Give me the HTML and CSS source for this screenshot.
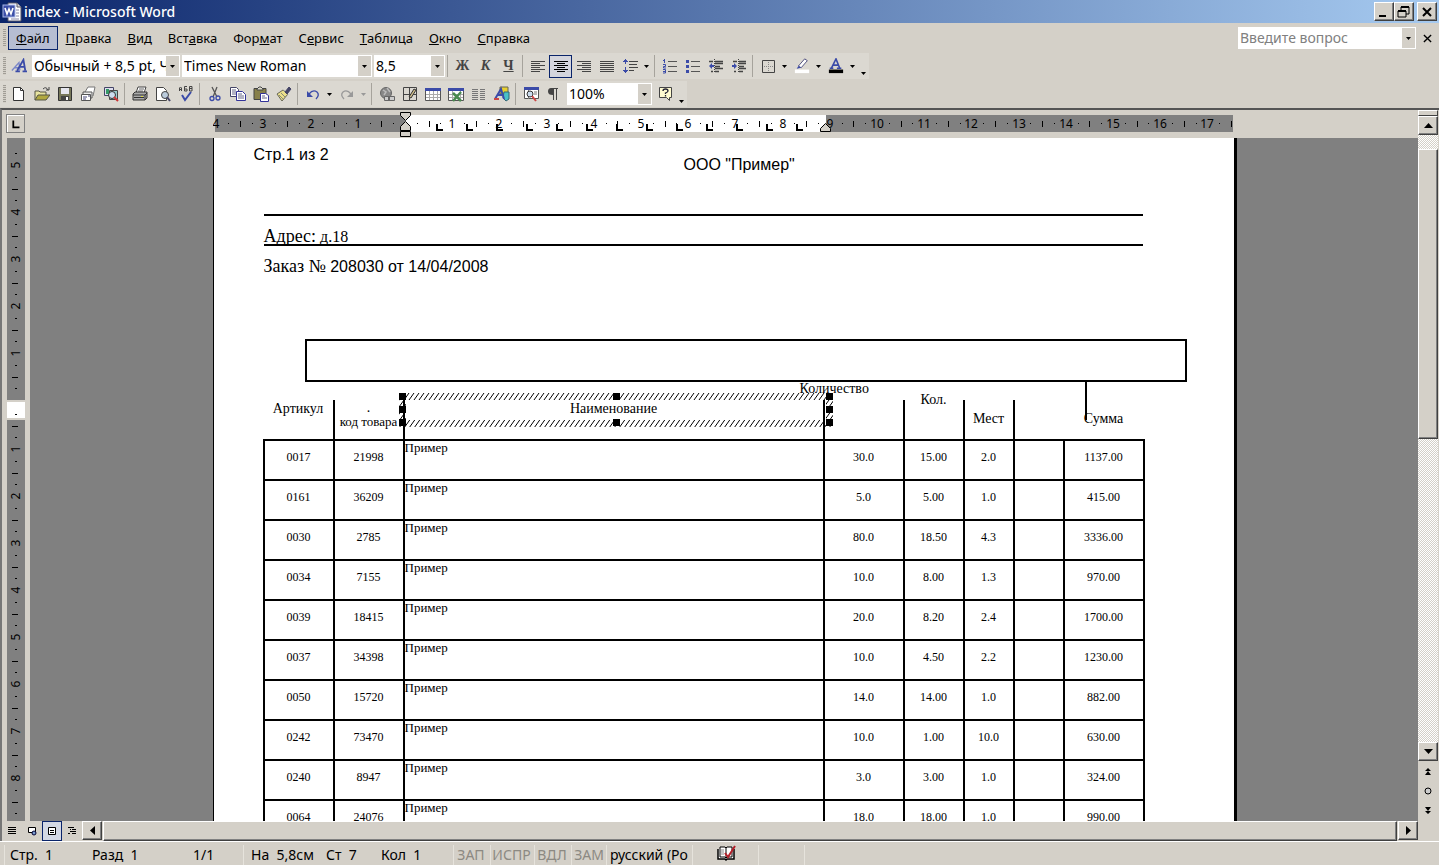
FILE: index.html
```html
<!DOCTYPE html>
<html lang="ru">
<head>
<meta charset="utf-8">
<title>index - Microsoft Word</title>
<link rel="stylesheet" href="styles.css">
</head>
<body>
<div class="window">
  <header class="titlebar">
    <svg class="app-icon" viewBox="0 0 20 20"><path d="M6 1h9l4 4v14H6z" fill="#fff" stroke="#556" /><path d="M15 1v4h4" fill="#ddd" stroke="#556"/><path d="M14 8h3M14 11h3M14 14h3M9 17h8" stroke="#88a"/><rect x="1" y="3" width="12" height="12" fill="#3c4fa8" stroke="#a9b8e8"/><path d="M3 6l2 6 2-5 2 5 2-6" fill="none" stroke="#fff" stroke-width="1.6"/></svg>
    <h1 class="title">index - Microsoft Word</h1>
    <div class="win-buttons">
      <button class="win-btn" aria-label="Свернуть"><svg viewBox="0 0 16 14"><path d="M3 11h7" stroke="#000" stroke-width="2"/></svg></button>
      <button class="win-btn" aria-label="Восстановить"><svg viewBox="0 0 16 14"><path d="M5 5V2h8v7h-3" fill="none" stroke="#000"/><path d="M5 2h8M2 6h8" stroke="#000" stroke-width="2"/><path d="M2 6h8v6H2z" fill="none" stroke="#000"/></svg></button>
      <button class="win-btn win-close" aria-label="Закрыть"><svg viewBox="0 0 16 14"><path d="M4 3l8 8M12 3l-8 8" stroke="#000" stroke-width="2"/></svg></button>
    </div>
  </header>

  <nav class="menubar">
    <span class="grip"></span>
    <button class="menu open"><u>Ф</u>айл</button>
    <button class="menu"><u>П</u>равка</button>
    <button class="menu"><u>В</u>ид</button>
    <button class="menu">Вст<u>а</u>вка</button>
    <button class="menu">Фор<u>м</u>ат</button>
    <button class="menu">С<u>е</u>рвис</button>
    <button class="menu"><u>Т</u>аблица</button>
    <button class="menu"><u>О</u>кно</button>
    <button class="menu"><u>С</u>правка</button>
    <div class="ask">
      <input class="ask-input" type="text" placeholder="Введите вопрос" aria-label="Введите вопрос">
      <button class="ask-drop" aria-label="Список вопросов"><svg class="tri" viewBox="0 0 7 4"><path d="M0 0h7L3.500 4z"/></svg></button>
    </div>
    <button class="doc-close" aria-label="Закрыть документ"><svg viewBox="0 0 10 10"><path d="M1 1l8 8M9 1l-8 8" stroke="#000" stroke-width="1.500"/></svg></button>
  </nav>

  <div class="toolbar">
    <span class="grip"></span>
    <button class="tool" aria-label="Стили"><svg viewBox="0 0 18 18"><path d="M1 14L9 5l1 9M4 11h6" fill="none" stroke="#7a86c8" stroke-width="1.500"/><path d="M7 14L14 2l2 12M9 10h7M5 15h5M13 15h5" fill="none" stroke="#3b4ba8" stroke-width="2"/></svg></button>
    <div class="combo style-combo"><select aria-label="Стиль"><option>Обычный + 8,5 pt, Черный</option></select><span class="drop"><svg class="tri" viewBox="0 0 7 4"><path d="M0 0h7L3.500 4z"/></svg></span></div>
    <div class="combo font-combo"><select aria-label="Шрифт"><option>Times New Roman</option></select><span class="drop"><svg class="tri" viewBox="0 0 7 4"><path d="M0 0h7L3.500 4z"/></svg></span></div>
    <div class="combo size-combo"><select aria-label="Размер"><option>8,5</option></select><span class="drop"><svg class="tri" viewBox="0 0 7 4"><path d="M0 0h7L3.500 4z"/></svg></span></div>
    <span class="sep"></span>
    <button class="tool letter">Ж</button>
    <button class="tool letter italic">К</button>
    <button class="tool letter under">Ч</button>
    <span class="sep"></span>
    <button class="tool" aria-label="По левому краю"><svg viewBox="0 0 16 16"><path d="M1 3.500h14M1 5.500h9M1 7.500h14M1 9.500h9M1 11.500h14M1 13.500h9" stroke="#444"/></svg></button>
    <button class="tool on" aria-label="По центру"><svg viewBox="0 0 16 16"><path d="M1 3.500h14M4 5.500h8M1 7.500h14M4 9.500h8M1 11.500h14M4 13.500h8" stroke="#000"/></svg></button>
    <button class="tool" aria-label="По правому краю"><svg viewBox="0 0 16 16"><path d="M1 3.500h14M6 5.500h9M1 7.500h14M6 9.500h9M1 11.500h14M6 13.500h9" stroke="#444"/></svg></button>
    <button class="tool" aria-label="По ширине"><svg viewBox="0 0 16 16"><path d="M1 3.500h14M1 5.500h14M1 7.500h14M1 9.500h14M1 11.500h14M1 13.500h14" stroke="#444"/></svg></button>
    <button class="tool" aria-label="Интервал"><svg viewBox="0 0 16 16"><path d="M3.500 1v5M3.500 9v6M1 3.500h5M2 2.500h3M1 12.500h5M2 13.500h3" stroke="#3b4ba8"/><path d="M7 3.500h9M7 6.500h8M7 9.500h9M7 12.500h5" stroke="#444"/></svg></button>
    <button class="arrow" aria-label="Варианты интервала"><svg class="tri" viewBox="0 0 7 4"><path d="M0 0h7L3.500 4z"/></svg></button>
    <span class="sep"></span>
    <button class="tool" aria-label="Нумерация"><svg viewBox="0 0 16 16"><path d="M6 3.500h9M6 8.500h9M6 13.500h9" stroke="#555"/><path d="M2.500 1v4M1 2.500h2M1 6.500h2.500v2H1.500v1.500H4M1 11.500h2.500v3.500H1M1 13.500h2" fill="none" stroke="#3b4ba8"/></svg></button>
    <button class="tool" aria-label="Маркеры"><svg viewBox="0 0 16 16"><path d="M6 3.500h9M6 8.500h9M6 13.500h9" stroke="#555"/><path d="M1 2h3v3H1zM1 7h3v3H1zM1 12h3v3H1z" fill="#3b4ba8"/></svg></button>
    <button class="tool" aria-label="Уменьшить отступ"><svg viewBox="0 0 16 16"><path d="M1 3.500h4M7 3.500h8M7 5.500h8M7 8.500h5M7 10.500h8M3 13.500h2M7 13.500h4" stroke="#444" stroke-width="1.500"/><path d="M6.500 1v14" stroke="#444" stroke-dasharray="1 1"/><path d="M1 8l3-3v2h2v2H4v2z" fill="#3b4ba8"/></svg></button>
    <button class="tool" aria-label="Увеличить отступ"><svg viewBox="0 0 16 16"><path d="M2 3.500h4M8 3.500h7M8 5.500h7M8 8.500h5M8 10.500h7M3 13.500h2M8 13.500h4" stroke="#444" stroke-width="1.500"/><path d="M7.500 1v14" stroke="#444" stroke-dasharray="1 1"/><path d="M6 8L3 5v2H1v2h2v2z" fill="#3b4ba8"/></svg></button>
    <span class="sep"></span>
    <button class="tool" aria-label="Границы"><svg viewBox="0 0 16 16"><path d="M2.500 2.500h12v12h-12z" fill="none" stroke="#444"/><path d="M8.500 4v10M4 8.500h10" stroke="#888" stroke-dasharray="1 1"/></svg></button>
    <button class="arrow" aria-label="Виды границ"><svg class="tri" viewBox="0 0 7 4"><path d="M0 0h7L3.500 4z"/></svg></button>
    <button class="tool" aria-label="Выделение цветом"><svg viewBox="0 0 16 18"><path d="M4 9l7-8 3 2-7 8z" fill="#fff" stroke="#447"/><path d="M4 9l3 2-5 1z" fill="#3b4ba8"/><path d="M0 13h16v4H0z" fill="#fff"/></svg></button>
    <button class="arrow" aria-label="Цвета выделения"><svg class="tri" viewBox="0 0 7 4"><path d="M0 0h7L3.500 4z"/></svg></button>
    <button class="tool" aria-label="Цвет шрифта"><svg viewBox="0 0 16 18"><path d="M3 11L8 1l4 10M5 8h6M1 11.500h4M9 11.500h5" fill="none" stroke="#3b4ba8" stroke-width="1.800"/><path d="M0 13h16v4H0z"/></svg></button>
    <button class="arrow" aria-label="Цвета шрифта"><svg class="tri" viewBox="0 0 7 4"><path d="M0 0h7L3.500 4z"/></svg></button>
    <button class="arrow more" aria-label="Параметры панели"><svg class="tri" viewBox="0 0 7 4"><path d="M0 0h7L3.500 4z"/></svg></button>
  </div>

  <div class="toolbar standard">
    <span class="grip"></span>
    <button class="tool" aria-label="Создать"><svg viewBox="0 0 16 16"><path d="M2.500 1.500h7l3 3v10h-10z" fill="#fff" stroke="#333"/><path d="M9.500 1.500v3h3" fill="none" stroke="#333"/></svg></button>
    <button class="tool" aria-label="Открыть"><svg viewBox="0 0 16 16"><path d="M1 14V5h4l1 1h6v3" fill="#e8e4a0" stroke="#554"/><path d="M1 14l3-5h12l-4 5z" fill="#b0a840" stroke="#554"/><path d="M9 3q3-3 5 1M12 4h3V1" fill="none" stroke="#444"/></svg></button>
    <button class="tool" aria-label="Сохранить"><svg viewBox="0 0 16 16"><path d="M1.500 1.500h13v13h-13z" fill="#77775a" stroke="#333"/><path d="M4 2h8v6H4z" fill="#e6e6ee"/><path d="M4 10h8v5H4z" fill="#444"/><path d="M9 11h2v3H9z" fill="#fff"/></svg></button>
    <button class="tool" aria-label="Сообщение"><svg viewBox="0 0 16 16"><path d="M5 6l3-5h7l-2 9" fill="#fff" stroke="#777"/><path d="M3 6h9v6H3z" fill="#eee" stroke="#555"/><path d="M1.500 8.500h9v6h-9z" fill="#fff" stroke="#555"/><path d="M3 11h4M3 13h3M8 10h2" stroke="#447"/></svg></button>
    <button class="tool" aria-label="Поиск"><svg viewBox="0 0 16 16"><path d="M1.500 1.500h9v8h-9z" fill="#dde" stroke="#446"/><path d="M3 3h3v5H3z" fill="#396"/><path d="M6.500 4.500h8v9h-8z" fill="#9cc" stroke="#444"/><circle cx="9" cy="9" r="3.500" fill="#cde" stroke="#333"/><path d="M11 11l4 4" stroke="#c33" stroke-width="2"/></svg></button>
    <span class="sep"></span>
    <button class="tool" aria-label="Печать"><svg viewBox="0 0 16 16"><path d="M4 7l2-6h8l-2 6" fill="#fff" stroke="#444"/><path d="M7 3h5M6 5h5" stroke="#666"/><path d="M1 8l2-2h12v6l-2 2H1z" fill="#aaa" stroke="#333"/><path d="M1 9h12v5M13 9l2-2M2 11.500h10" fill="none" stroke="#333"/><path d="M9 10.500h2" stroke="#dd4"/></svg></button>
    <button class="tool" aria-label="Просмотр"><svg viewBox="0 0 16 16"><path d="M1.500 1.500h7l3 3v10h-10z" fill="#fff" stroke="#444"/><circle cx="10" cy="9" r="3.500" fill="#bcd" stroke="#444"/><path d="M12 11l3 4" stroke="#446" stroke-width="2"/></svg></button>
    <button class="tool" aria-label="Правописание"><svg viewBox="0 0 16 16"><path d="M1.500 5V2q1-2 2 0v3M2 3.500h2M9 .5H6.500V5H9V3H7M11.500 5V.5H14V5h-2.500M12 2.500h2" fill="none" stroke="#444"/><path d="M4 9l3 5 6-8" fill="none" stroke="#3b4ba8" stroke-width="2"/></svg></button>
    <span class="sep"></span>
    <button class="tool" aria-label="Вырезать"><svg viewBox="0 0 16 16"><path d="M5 1l5 10M10 1L6 11" stroke="#555" stroke-width="1.300"/><circle cx="5" cy="12.500" r="2" fill="none" stroke="#3b4ba8" stroke-width="1.300"/><circle cx="11" cy="12" r="2" fill="none" stroke="#3b4ba8" stroke-width="1.300"/></svg></button>
    <button class="tool" aria-label="Копировать"><svg viewBox="0 0 16 16"><path d="M.5 1.500h6l2 2v7h-8z" fill="#fff" stroke="#446"/><path d="M2 4h4M2 6h4M2 8h4" stroke="#668"/><path d="M6.500 5.500h6l3 3v6h-9z" fill="#fff" stroke="#339"/><path d="M8 8h4M8 10h6M8 12h6" stroke="#668"/></svg></button>
    <button class="tool" aria-label="Вставить"><svg viewBox="0 0 16 16"><path d="M1 2.500h12v11H1z" fill="#88804a" stroke="#444"/><path d="M4 3l2-2h2l2 2v1H4z" fill="#ddc" stroke="#444"/><path d="M7.500 7.500h5l3 2v6h-8z" fill="#fff" stroke="#339"/><path d="M9 10h3M9 12h5" stroke="#668"/></svg></button>
    <button class="tool" aria-label="Формат по образцу"><svg viewBox="0 0 16 16"><path d="M1 8l6-4 5 4-6 7z" fill="#eadf8a" stroke="#665"/><path d="M7 4l5 5M3 9l4 4M5 7l4 4" stroke="#887"/><path d="M9 6l4-5 2 2-4 5z" fill="#446" stroke="#446"/></svg></button>
    <span class="sep"></span>
    <button class="tool" aria-label="Отменить"><svg viewBox="0 0 16 16"><path d="M4 8q4-5 8-2 3 3-1 7" fill="none" stroke="#3b4ba8" stroke-width="1.300"/><path d="M2 5v6h6z" fill="#3b4ba8"/></svg></button>
    <button class="arrow" aria-label="Список отмены"><svg class="tri" viewBox="0 0 7 4"><path d="M0 0h7L3.500 4z"/></svg></button>
    <button class="tool" aria-label="Вернуть" disabled><svg viewBox="0 0 16 16"><path d="M12 8Q8 3 4 6q-3 3 1 7" fill="none" stroke="#999" stroke-width="1.300"/><path d="M14 5v6H8z" fill="#999"/></svg></button>
    <button class="arrow pale" aria-label="Список возврата" disabled><svg class="tri" viewBox="0 0 7 4"><path d="M0 0h7L3.500 4z"/></svg></button>
    <span class="sep"></span>
    <button class="tool" aria-label="Гиперссылка"><svg viewBox="0 0 16 16"><circle cx="7" cy="7" r="5.500" fill="#888" stroke="#666"/><path d="M4 4l3 2-2 3M8 2l3 4" fill="none" stroke="#bbb" stroke-width="1.500"/><path d="M5.500 10.500h5v4h-5zM9.500 10.500h6v4h-6z" fill="#ccc" stroke="#666"/></svg></button>
    <button class="tool" aria-label="Таблицы и границы"><svg viewBox="0 0 16 16"><path d="M1.500 1.500h13v13h-13zM1.500 8.500h13M7.500 1.500v13" fill="none" stroke="#444"/><path d="M7 11l5-8 2 1-5 8z" fill="#cb8" stroke="#333"/></svg></button>
    <button class="tool" aria-label="Добавить таблицу"><svg viewBox="0 0 16 16"><path d="M.5 2.500h15v12H.5z" fill="#fff" stroke="#555"/><path d="M0 2h16v3H0z" fill="#3b4ba8"/><path d="M1 8.500h14M1 11.500h14M4.500 5v9M8.500 5v9M12.500 5v9" stroke="#aaa"/></svg></button>
    <button class="tool" aria-label="Таблица Excel"><svg viewBox="0 0 16 16"><path d="M.5 2.500h15v12H.5z" fill="#fff" stroke="#555"/><path d="M0 2h16v3H0z" fill="#3b4ba8"/><path d="M1 8.500h14M1 11.500h14M4.500 5v9M12.500 5v9" stroke="#aaa"/><path d="M5 7l8 8M13 6l-8 9" stroke="#4a8a50" stroke-width="2.500"/></svg></button>
    <button class="tool" aria-label="Колонки"><svg viewBox="0 0 16 16"><path d="M1 3.500h6M1 5.500h6M1 7.500h6M1 9.500h6M1 11.500h6M1 13.500h6M9 3.500h5M9 5.500h5M9 7.500h5M9 9.500h5M9 11.500h5M9 13.500h5" stroke="#777"/></svg></button>
    <button class="tool" aria-label="Рисование"><svg viewBox="0 0 16 16"><path d="M6 1h8v7H6z" fill="#e8cf30" stroke="#665"/><path d="M10 6h5v7l-3 2-3-3z" fill="#4ac0c8" stroke="#367"/><path d="M1 13L7 3l3 10M3 9h5" fill="none" stroke="#3b4ba8" stroke-width="2"/><path d="M0 13h5" stroke="#c44" stroke-width="2"/></svg></button>
    <span class="sep"></span>
    <button class="tool" aria-label="Схема документа"><svg viewBox="0 0 16 16"><path d="M1.500 1.500h14v11h-14z" fill="#fff" stroke="#555"/><path d="M1 1h15v3H1z" fill="#3b4ba8"/><path d="M5.500 4v9M11 6h3M11 8h3" stroke="#777"/><circle cx="7" cy="8" r="3" fill="#cde" stroke="#333"/><path d="M9 10l4 5" stroke="#c44" stroke-width="2"/></svg></button>
    <button class="tool" aria-label="Непечатаемые знаки"><svg viewBox="0 0 16 16"><path d="M4 2h8v1h-1v11h-1V3H8v11H7V9Q2 9 2 5.500T5 2z" fill="#444"/></svg></button>
    <div class="combo zoom-combo"><select aria-label="Масштаб"><option>100%</option></select><span class="drop"><svg class="tri" viewBox="0 0 7 4"><path d="M0 0h7L3.500 4z"/></svg></span></div>
    <button class="tool" aria-label="Справка"><svg viewBox="0 0 16 16"><path d="M2.500 1.500h12v10h-2v3l-3-3h-7z" fill="#fffbd0" stroke="#444"/><path d="M6 5q0-2 2.500-2T11 5q0 1-2.500 2v1M8.500 9v1.500" fill="none" stroke="#223" stroke-width="1.300"/></svg></button>
    <button class="arrow more" aria-label="Параметры панели"><svg class="tri" viewBox="0 0 7 4"><path d="M0 0h7L3.500 4z"/></svg></button>
  </div>

  <main class="editor">
    <div class="corner"><button class="tab-kind" aria-label="Тип табуляции"><svg viewBox="0 0 17 17"><path d="M6 5v8h7" fill="none" stroke="#000" stroke-width="2"/></svg></button></div>
    <div class="hruler"><svg id="hruler" width="1024" height="28" role="img" aria-label="Горизонтальная линейка"></svg></div>
    <div class="vruler"><svg id="vruler" width="18" height="683" role="img" aria-label="Вертикальная линейка"></svg></div>

    <div class="canvas">
      <article class="page">
        <p class="page-no">Стр.1 из 2</p>
        <p class="company">ООО "Пример"</p>
        <p class="address"><span>Адрес:</span> д.18</p>
        <p class="order"><span>Заказ №</span> 208030 от 14/04/2008</p>
        <div class="frame"></div>
        <div class="goods-wrap">
          <table class="goods">
            <colgroup><col class="c70"><col class="c70"><col class="c420"><col class="c80"><col class="c60"><col class="c50"><col class="c50"><col class="c80"></colgroup>
            <thead><tr>
              <th>Артикул</th><th class="code">.<br><span>код товара</span></th><th>Наименование</th><th class="qty"><span>Количество</span></th><th class="high">Кол.</th><th class="low">Мест</th><th class="bare"></th><th class="low bare">Сумма</th>
            </tr></thead>
            <tbody>
              <tr><td>0017</td><td>21998</td><td>Пример</td><td>30.0</td><td>15.00</td><td>2.0</td><td></td><td>1137.00</td></tr>
              <tr><td>0161</td><td>36209</td><td>Пример</td><td>5.0</td><td>5.00</td><td>1.0</td><td></td><td>415.00</td></tr>
              <tr><td>0030</td><td>2785</td><td>Пример</td><td>80.0</td><td>18.50</td><td>4.3</td><td></td><td>3336.00</td></tr>
              <tr><td>0034</td><td>7155</td><td>Пример</td><td>10.0</td><td>8.00</td><td>1.3</td><td></td><td>970.00</td></tr>
              <tr><td>0039</td><td>18415</td><td>Пример</td><td>20.0</td><td>8.20</td><td>2.4</td><td></td><td>1700.00</td></tr>
              <tr><td>0037</td><td>34398</td><td>Пример</td><td>10.0</td><td>4.50</td><td>2.2</td><td></td><td>1230.00</td></tr>
              <tr><td>0050</td><td>15720</td><td>Пример</td><td>14.0</td><td>14.00</td><td>1.0</td><td></td><td>882.00</td></tr>
              <tr><td>0242</td><td>73470</td><td>Пример</td><td>10.0</td><td>1.00</td><td>10.0</td><td></td><td>630.00</td></tr>
              <tr><td>0240</td><td>8947</td><td>Пример</td><td>3.0</td><td>3.00</td><td>1.0</td><td></td><td>324.00</td></tr>
              <tr><td>0064</td><td>24076</td><td>Пример</td><td>18.0</td><td>18.00</td><td>1.0</td><td></td><td>990.00</td></tr>
            </tbody>
          </table>
          <span class="stray-line"></span>
          <svg class="selection" width="434" height="34" viewBox="0 0 434 34">
            <defs><pattern id="hatch" width="5" height="7" patternUnits="userSpaceOnUse"><path d="M-1 8.400L6-1.400M-6 8.400L1-1.400M4 8.400L11-1.400" stroke="#000"/></pattern></defs>
            <path fill-rule="evenodd" d="M0 0h434v34H0zM7 7v20h420V7z" fill="url(#hatch)"/>
            <path d="M0 0h7v7H0zM214 0h7v7h-7zM427 0h7v7h-7zM0 13h7v7H0zM427 13h7v7h-7zM0 26h7v7H0zM214 26h7v7h-7zM427 26h7v7h-7z"/>
          </svg>
        </div>
      </article>
    </div>

    <div class="vscroll">
      <span class="split"></span>
      <button class="sb" aria-label="Вверх"><svg class="big" viewBox="0 0 9 5"><path d="M0 5h9L4.500 0z"/></svg></button>
      <div class="track"><span class="thumb"></span></div>
      <button class="sb" aria-label="Вниз"><svg class="big" viewBox="0 0 9 5"><path d="M0 0h9L4.500 5z"/></svg></button>
      <button class="browse" aria-label="Предыдущая страница"><svg viewBox="0 0 8 8"><path d="M1 4h6L4 1zM1 8h6L4 4z"/></svg></button>
      <button class="browse" aria-label="Объект перехода"><svg viewBox="0 0 8 8"><circle cx="4" cy="4" r="3" fill="#ccc" stroke="#000"/></svg></button>
      <button class="browse" aria-label="Следующая страница"><svg viewBox="0 0 8 8"><path d="M1 0h6L4 4zM1 4h6L4 7z"/></svg></button>
    </div>

    <div class="hbar">
      <button class="view" aria-label="Обычный"><svg viewBox="0 0 10 10"><path d="M1 1.500h8M1 3.500h8M1 5.500h8M1 7.500h8" stroke="#000"/></svg></button>
      <button class="view" aria-label="Веб-документ"><svg viewBox="0 0 10 10"><path d="M1.500 1.500h7v5h-7z" fill="#fff" stroke="#000"/><circle cx="7" cy="7" r="2" fill="#79c" stroke="#003"/></svg></button>
      <button class="view on" aria-label="Разметка страницы"><svg viewBox="0 0 10 10"><path d="M1.500 1.500h7v7h-7z" fill="#fff" stroke="#000"/><path d="M3 4.500h4M3 6.500h4" stroke="#000"/></svg></button>
      <button class="view" aria-label="Структура"><svg viewBox="0 0 10 10"><path d="M1 1.500h6M3 3.500h1M5 3.500h4M3 5.500h6M1 7.500h2M5 7.500h4" stroke="#000"/></svg></button>
      <button class="sb" aria-label="Влево"><svg class="side" viewBox="0 0 5 9"><path d="M5 0v9L0 4.500z"/></svg></button>
      <div class="htrack"><span class="hthumb"></span></div>
      <button class="sb" aria-label="Вправо"><svg class="side" viewBox="0 0 5 9"><path d="M0 0v9l5-4.500z"/></svg></button>
    </div>
  </main>

  <footer class="status">
    <div class="place"><span class="w1">Стр. &nbsp;1</span><span class="w2">Разд &nbsp;1</span><span class="w3">1/1</span></div>
    <div class="place"><span class="w4">На &nbsp;5,8см</span><span class="w5">Ст &nbsp;7</span><span class="w6">Кол &nbsp;1</span></div>
    <span class="mode m1">ЗАП</span><span class="mode m2">ИСПР</span><span class="mode m1">ВДЛ</span><span class="mode m1">ЗАМ</span>
    <span class="lang">русский (Ро</span>
    <span class="book"><svg viewBox="0 0 20 16"><path d="M2 4v10h7l1 1 1-1h7V4" fill="#fff" stroke="#000" stroke-width="1.500"/><path d="M4 2h5l1 1 1-1h5v10h-5l-1 1-1-1H4zM10 3v10" fill="#fff" stroke="#000"/><path d="M5 5h3M5 7h3M5 9h3" stroke="#888"/><path d="M9 8l3 4 7-11" fill="none" stroke="#b3202a" stroke-width="2"/></svg></span>
    <span class="cell"></span><span class="cell"></span>
  </footer>
</div>
<script src="rulers.js"></script>
</body>
</html>
```

FILE: styles.css
```css
* { box-sizing: border-box; }

body {
  margin: 0;
  background: #d4d0c8;
  color: #000;
  font: 14px/18px "Noto Sans", "Open Sans", sans-serif;
}

button {
  display: flex;
  align-items: center;
  justify-content: center;
  margin: 0;
  padding: 0;
  border: 0;
  background: none;
  color: inherit;
  font: inherit;
}

svg { display: block; }
p { margin: 0; }

.window { display: flex; flex-direction: column; height: 100vh; overflow: hidden; }

/* Title bar */
.titlebar {
  display: flex;
  align-items: center;
  flex: none;
  height: 23px;
  padding: 0 2px;
  background: linear-gradient(90deg, #0a246a, #a6caf0);
  color: #fff;
}
.app-icon { width: 20px; height: 20px; }
.title { flex: 1; margin: 0 0 0 2px; font-size: 14px; font-weight: 500; }
.win-buttons { display: flex; }
.win-btn, .sb {
  flex: none;
  width: 20px;
  height: 19px;
  background: #d4d0c8;
  border: 1px solid;
  border-color: #fff #404040 #404040 #fff;
  box-shadow: inset -1px -1px 0 #808080;
}
.win-btn svg { width: 16px; height: 14px; }
.win-close { margin-left: 3px; }

/* Menu */
.menubar { display: flex; align-items: center; flex: none; height: 30px; padding: 0 4px 0 3px; }
.grip {
  flex: none;
  width: 3px;
  height: 18px;
  margin-right: 2px;
  background: repeating-linear-gradient(180deg, #a09d96 0 1px, #d4d0c8 1px 2px);
}
.menu { height: 24px; padding: 0 7px; border: 1px solid transparent; font-size: 13px; }
.menu.open { background: #b6bdd2; border-color: #0a246a; }
.ask { display: flex; margin-left: auto; width: 178px; height: 22px; border: 1px solid #fff; background: #fff; }
.ask-input { flex: 1; min-width: 0; border: 0; padding: 0 1px; font: inherit; background: #fff; }
.ask-input::placeholder { color: #808080; opacity: 1; }
.ask-drop { width: 13px; background: #d4d0c8; }
.doc-close { width: 16px; height: 16px; margin-left: 3px; }
.doc-close svg { width: 9px; height: 9px; }

/* Tool bars */
.toolbar {
  display: flex;
  align-items: center;
  align-self: flex-start;
  flex: none;
  height: 26px;
  margin-bottom: 2px;
  padding-left: 3px;
  background: #dbd8d1;
}
.standard { margin-bottom: 1px; }
.toolbar .grip { margin-right: 1px; }
.tool { flex: none; width: 23px; height: 23px; }
.tool svg { width: 16px; height: 16px; }
.tool.on { background: #d4d5dd; border: 1px solid #0a246a; }
.arrow { flex: none; width: 11px; height: 23px; }
.more { align-items: flex-end; padding-bottom: 3px; }
.tri { width: 5px; height: 3px; }
.pale { fill: #999; }
.sep { flex: none; width: 1px; height: 22px; margin: 0 3px 0 2px; background: #a6a39c; }
.letter { font: bold 14px/20px "Liberation Serif", serif; color: #444; }
.italic { font-style: italic; }
.under { text-decoration: underline; }
.combo { display: grid; grid-template-columns: 1fr 13px; height: 22px; margin-right: 2px; border: 1px solid #fff; background: #fff; }
.combo select {
  min-width: 0;
  padding: 0 0 0 1px;
  border: 0;
  appearance: none;
  background: #fff;
  color: #000;
  font: inherit;
  overflow: hidden;
}
.drop { display: grid; place-items: center; background: #d4d0c8; }
.style-combo { width: 148px; margin-left: 2px; }
.font-combo { width: 190px; }
.size-combo { width: 71px; margin-right: 0; }
.zoom-combo { width: 85px; margin: 0 1px 0 2px; }

/* Editor */
.editor {
  display: grid;
  flex: 1;
  min-height: 0;
  grid-template: 28px 1fr 20px / 28px 1fr 21px;
  border-top: 2px solid #555;
  border-left: 2px solid #777;
}
.corner { padding: 4px 0 0 4px; }
.tab-kind { width: 19px; height: 19px; border: 1px solid #808080; box-shadow: inset 1px 1px 0 #fff; }
.tab-kind svg { width: 15px; height: 15px; }
.hruler { display: flex; justify-content: center; padding-left: 1px; overflow: hidden; }
.hruler svg, .vruler svg { flex: none; }
.vruler { padding-left: 5px; overflow: hidden; }
.hruler text, .vruler text { font: 12px "Noto Sans", sans-serif; text-anchor: middle; }
.canvas { display: flex; justify-content: center; padding-left: 1px; overflow: hidden; background: #808080; }
.page {
  flex: none;
  width: 1024px;
  padding: 8px 91px 0 40px;
  background: #fff;
  border-left: 1px solid #000;
  border-right: 3px solid #000;
}
.page-no, .company { font: 16px/18px "Liberation Sans", sans-serif; }
.company { margin: -8px 0 0 -20px; padding-left: 450px; }
.address, .order { margin-left: 10px; font: 16px/20px "Liberation Serif", serif; }
.address { height: 32px; margin-top: 40px; padding-top: 11px; border-top: 2px solid #000; border-bottom: 2px solid #000; }
.address span, .order span { font: 18px/18px "Liberation Serif", serif; }
.order { padding-top: 11px; font-family: "Liberation Sans", sans-serif; }
.frame { width: 882px; height: 43px; margin: 62px 0 0 51px; border: 2px solid #000; }

/* Order table */
.goods-wrap { position: relative; margin: 18px 0 0 9px; }
.goods { width: 882px; border-collapse: collapse; table-layout: fixed; font: 12px/14px "Liberation Serif", serif; }
.c70 { width: 70px; } .c420 { width: 420px; } .c80 { width: 80px; } .c60 { width: 60px; } .c50 { width: 50px; }
.goods td { height: 40px; padding: 0 0 6px; border: 2px solid #000; text-align: center; }
.goods td:nth-child(3) { padding: 0; font-size: 13px; text-align: left; vertical-align: top; }
.goods th { height: 40px; padding: 2px 0 0; border-right: 2px solid #000; font-size: 14px; font-weight: normal; vertical-align: top; white-space: nowrap; }
.goods th.bare { border-right: 0; }
.goods th.high { padding: 0 0 8px; line-height: 0; }
.goods th.low { padding-top: 12px; }
.goods .code { padding-top: 1px; }
.goods .code span { font-size: 13px; }
.qty span { position: absolute; top: -18px; left: 537px; }
.stray-line { position: absolute; top: -20px; left: 822px; width: 2px; height: 40px; background: #000; }
.selection { position: absolute; top: -7px; left: 136px; }

/* Scroll bars */
.vscroll { grid-column: 3; grid-row: 1 / 4; display: flex; flex-direction: column; padding: 0 1px 20px 0; }
.split { flex: none; height: 6px; border: 1px solid; border-color: #fff #404040 #404040 #fff; }
.track { flex: 1; padding-top: 14px; background: repeating-conic-gradient(#fff 0 25%, #d4d0c8 0 50%) 0 0 / 2px 2px; }
.thumb, .hthumb { display: block; background: #d4d0c8; border: 1px solid; border-color: #fff #404040 #404040 #fff; box-shadow: inset -1px -1px 0 #808080; }
.thumb { height: 290px; }
.big { width: 9px; height: 5px; }
.side { width: 5px; height: 9px; }
.browse { flex: none; height: 20px; }
.browse svg { width: 8px; height: 8px; }
.hbar { grid-column: 1 / 3; grid-row: 3; display: flex; }
.view { width: 20px; height: 20px; }
.view svg { width: 10px; height: 10px; }
.view.on { background: #d3d8e4; border: 1px solid #0a246a; }
.htrack { flex: 1; padding: 0 1px; }
.hthumb { height: 20px; }

/* Status bar */
.status { display: flex; flex: none; height: 24px; padding: 3px 0 0 4px; border-top: 1px solid #fff; line-height: 20px; }
.place { display: flex; border-left: 1px solid #e6e3dc; }
.place span { white-space: nowrap; }
.w1 { width: 82px; padding-left: 5px; } .w2 { width: 101px; padding-left: 5px; } .w3 { width: 55px; padding-left: 5px; }
.w4 { width: 82px; padding-left: 7px; } .w5 { width: 50px; } .w6 { width: 75px; padding-left: 5px; }
.mode { margin-left: 2px; color: #8c8982; text-align: center; border-left: 1px solid #e6e3dc; }
.m1 { width: 35px; } .m2 { width: 42px; }
.lang { width: 86px; padding-left: 3px; border-left: 1px solid #e6e3dc; overflow: hidden; white-space: nowrap; }
.book { display: grid; place-items: start center; width: 66px; border-left: 1px solid #e6e3dc; }
.book svg { width: 20px; height: 16px; }
.cell { width: 46px; border-left: 1px solid #e6e3dc; }
```

FILE: rulers.js
```js
const NS = "http://www.w3.org/2000/svg";
const CM = 47.2;

function add(parent, name, attrs, text) {
  const el = document.createElementNS(NS, name);
  for (const key in attrs) el.setAttribute(key, attrs[key]);
  if (text !== undefined) el.textContent = text;
  parent.appendChild(el);
}

const h = document.getElementById("hruler");
const zero = 192;
add(h, "rect", { x: 2, y: 5, width: 1018, height: 17, fill: "#808080" });
add(h, "rect", { x: zero, y: 5, width: 421, height: 17, fill: "#fff" });
for (let q = -16; q <= 70; q++) {
  const x = Math.round(zero + q * CM / 4);
  if (q % 4 === 0) {
    if (q) add(h, "text", { x, y: 18 }, Math.abs(q / 4));
  } else {
    const tall = q % 2 === 0;
    add(h, "rect", { x, y: tall ? 11 : 13, width: 1, height: tall ? 6 : 1 });
  }
}
for (let x = 223; x <= 583; x += 30) {
  add(h, "path", { d: `M${x + 1} 14v6h6`, fill: "none", stroke: "#000", "stroke-width": 2 });
}
const marker = { fill: "#d4d0c8", stroke: "#000" };
add(h, "path", { d: "M187.500 2.500h10v3l-5 5-5-5zM187.500 20.500v-4l5-5 5 5v4zM187.500 21.500h10v5h-10z", ...marker });
add(h, "path", { d: "M607.500 21.500v-3l5-5 5 5v3z", ...marker });

const v = document.getElementById("vruler");
add(v, "rect", { x: 0, y: 0, width: 18, height: 683, fill: "#808080" });
add(v, "rect", { x: 0, y: 262, width: 18, height: 20, fill: "#d4d0c8" });
add(v, "rect", { x: 0, y: 264, width: 18, height: 16, fill: "#fff" });
for (let q = -21; q <= 35; q++) {
  const origin = q < 0 ? 262 : 264;
  const y = Math.round(origin + q * 47 / 4);
  if (q % 4 === 0) {
    if (q) add(v, "text", { transform: `translate(13 ${y}) rotate(-90)` }, Math.abs(q / 4));
  } else {
    const tall = q % 2 === 0;
    add(v, "rect", { x: tall ? 5 : 8, y, width: tall ? 6 : 2, height: 1 });
  }
}
```
